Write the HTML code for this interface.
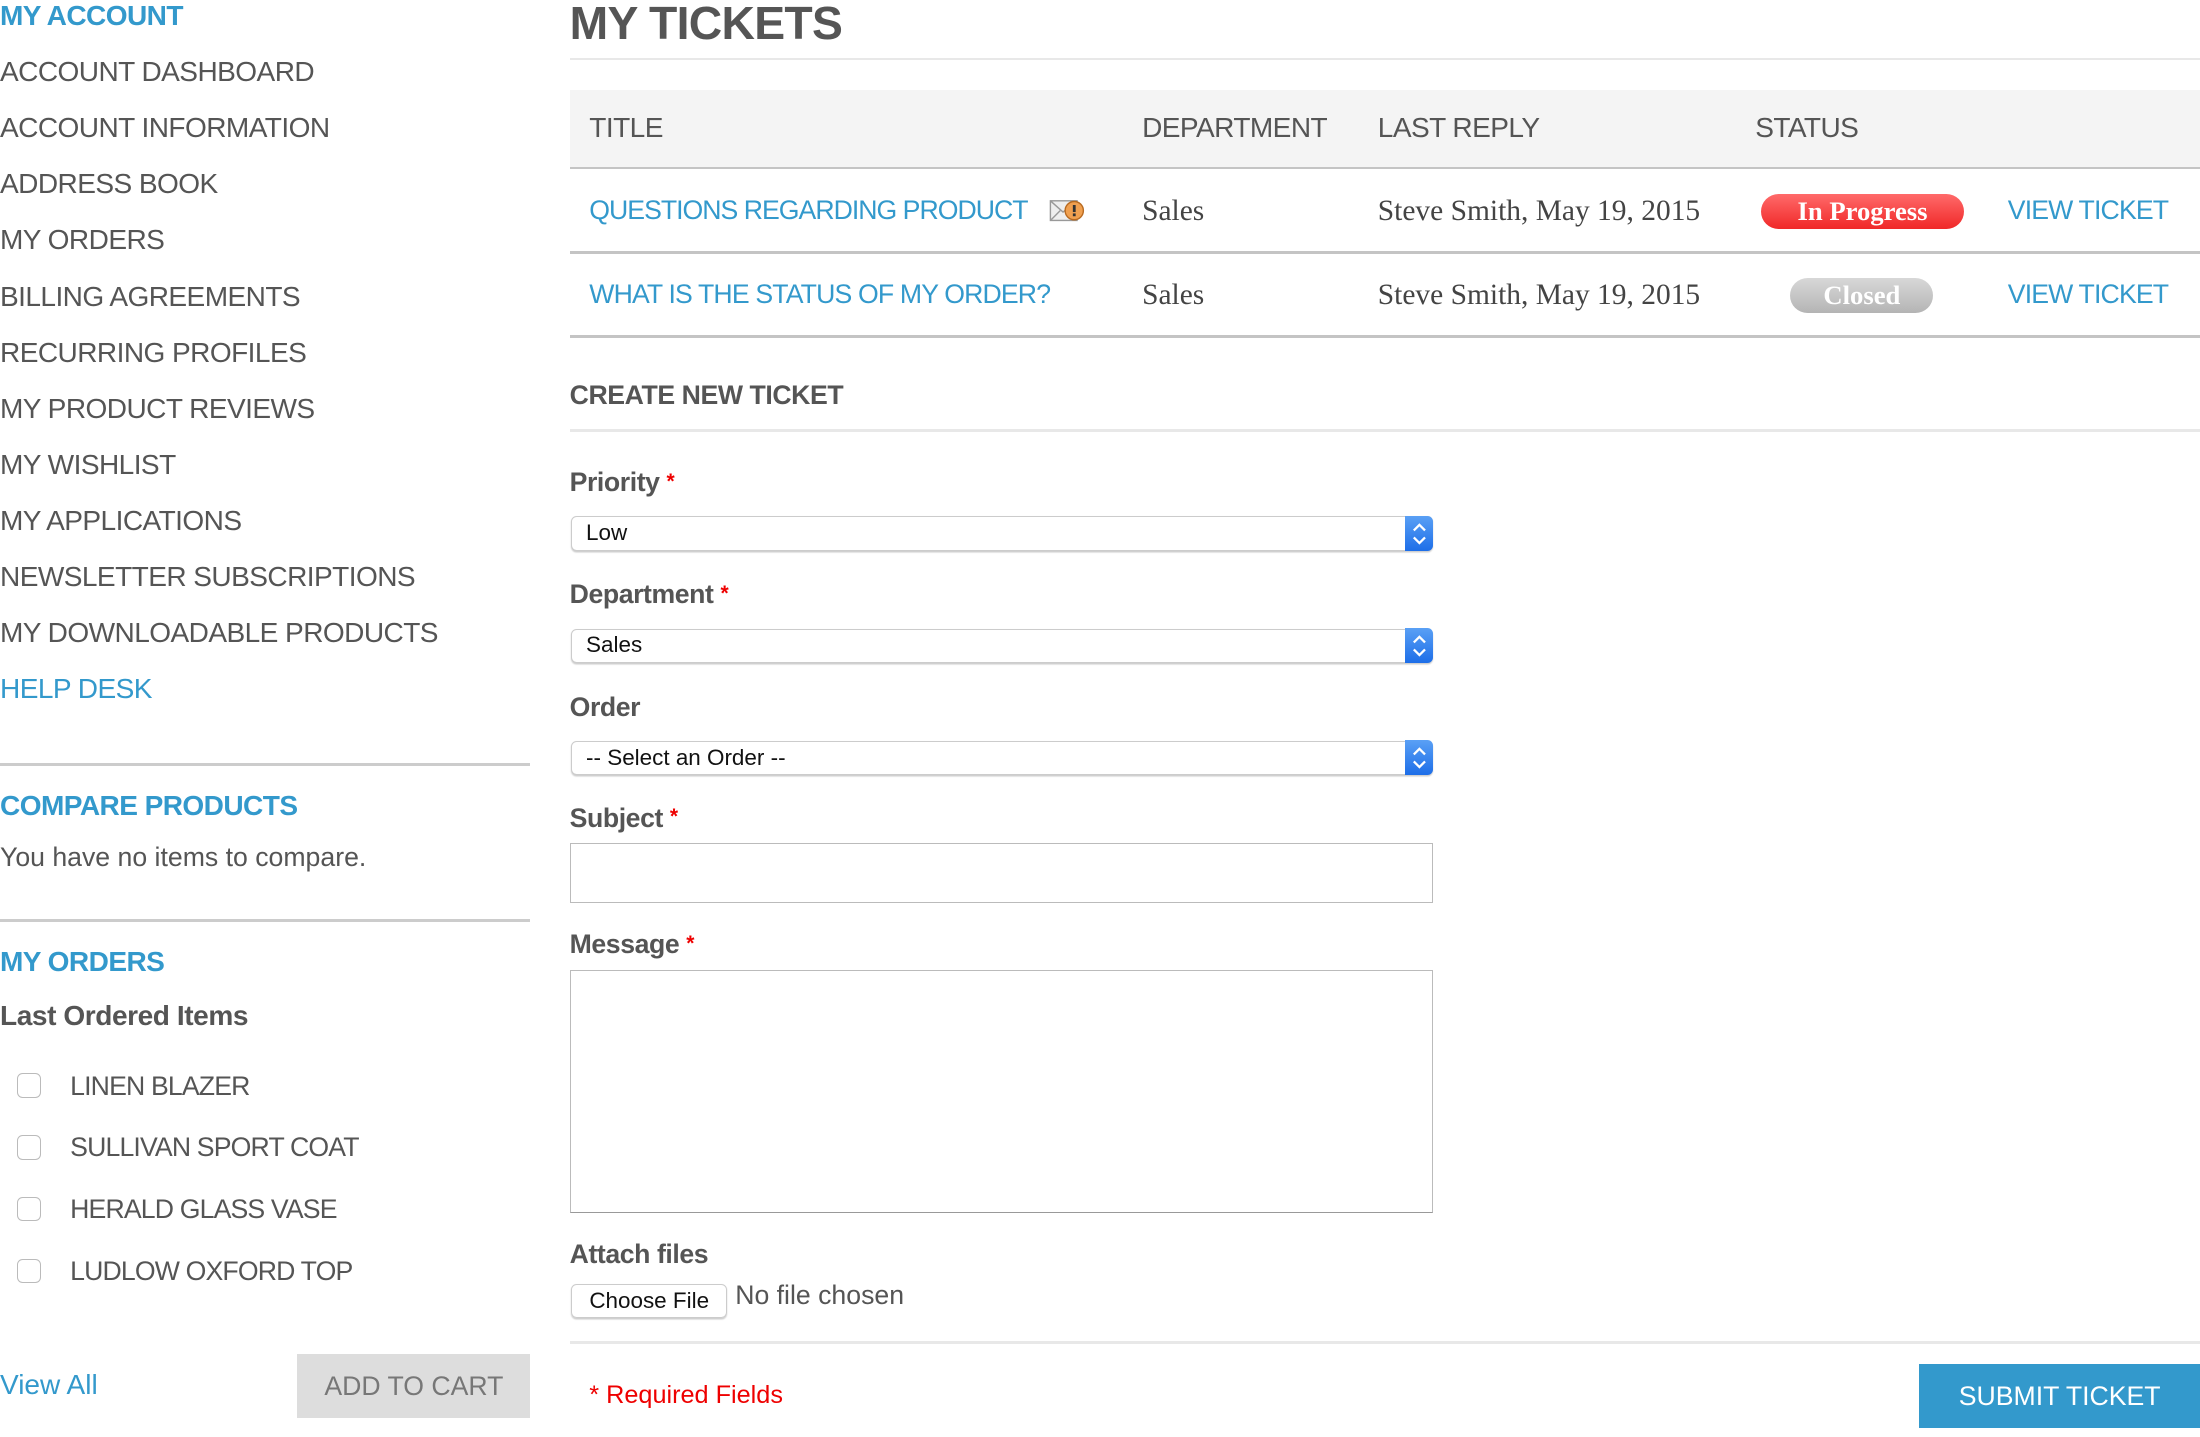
<!DOCTYPE html>
<html><head><meta charset="utf-8">
<style>
html,body{margin:0;padding:0;background:#fff;overflow:hidden;width:2200px;height:1436px}
#w{position:absolute;left:0;top:0;width:1568px;height:1024px;zoom:1.40306;font-family:"Liberation Sans",sans-serif;color:#555}
.a{position:absolute;white-space:nowrap}
.nav{font-size:20px;color:#555;letter-spacing:-0.4px}
.blue{color:#3399cc}
.hr{position:absolute;height:2px;background:#e8e8e8}
.sel{position:absolute;left:407px;width:613px;height:23px;border:1px solid #ccc;border-radius:4px;box-shadow:0 1px 1px rgba(0,0,0,.2);background:#fff;font-size:16px;color:#111}
.sel span{position:absolute;left:10px;top:2px}
.sel i{position:absolute;right:-1px;top:-1px;width:20px;height:25px;background:linear-gradient(#5aa0f5,#1d6ee8);border-radius:0 4px 4px 0}
.sel i svg{position:absolute;left:4px;top:4px}
.lbl{font-size:19px;color:#555;font-weight:bold;letter-spacing:-0.3px}
.lbl b{color:#e00;font-size:15px;position:relative;top:2px;vertical-align:top}
.cb{position:absolute;left:12px;width:16px;height:16px;border:1px solid #bbb;border-radius:4px}
.serif{font-family:"Liberation Serif",serif;font-size:21px;color:#444}
</style></head><body><div id="w">
<div class="a blue" style="left:0;top:0;font-size:20px;font-weight:bold;letter-spacing:-0.4px">MY ACCOUNT</div>
<div class="a nav" style="left:0;top:40px">ACCOUNT DASHBOARD</div>
<div class="a nav" style="left:0;top:80px">ACCOUNT INFORMATION</div>
<div class="a nav" style="left:0;top:120px">ADDRESS BOOK</div>
<div class="a nav" style="left:0;top:160px">MY ORDERS</div>
<div class="a nav" style="left:0;top:200px">BILLING AGREEMENTS</div>
<div class="a nav" style="left:0;top:240px">RECURRING PROFILES</div>
<div class="a nav" style="left:0;top:280px">MY PRODUCT REVIEWS</div>
<div class="a nav" style="left:0;top:320px">MY WISHLIST</div>
<div class="a nav" style="left:0;top:360px">MY APPLICATIONS</div>
<div class="a nav" style="left:0;top:400px">NEWSLETTER SUBSCRIPTIONS</div>
<div class="a nav" style="left:0;top:440px">MY DOWNLOADABLE PRODUCTS</div>
<div class="a nav blue" style="left:0;top:480px">HELP DESK</div>
<div class="hr" style="left:0;top:544px;width:378px;background:#ccc"></div>
<div class="a blue" style="left:0;top:563px;font-size:20px;font-weight:bold;letter-spacing:-0.4px">COMPARE PRODUCTS</div>
<div class="a" style="left:0;top:600px;font-size:19px">You have no items to compare.</div>
<div class="hr" style="left:0;top:655px;width:378px;background:#ccc"></div>
<div class="a blue" style="left:0;top:674px;font-size:20px;font-weight:bold;letter-spacing:-0.4px">MY ORDERS</div>
<div class="a" style="left:0;top:713px;font-size:20px;font-weight:bold;letter-spacing:-0.3px">Last Ordered Items</div>
<div class="cb" style="top:765px"></div><div class="a nav" style="left:50px;top:763px;font-size:19px;letter-spacing:-0.6px">LINEN BLAZER</div>
<div class="cb" style="top:809px"></div><div class="a nav" style="left:50px;top:807px;font-size:19px;letter-spacing:-0.6px">SULLIVAN SPORT COAT</div>
<div class="cb" style="top:853px"></div><div class="a nav" style="left:50px;top:851px;font-size:19px;letter-spacing:-0.6px">HERALD GLASS VASE</div>
<div class="cb" style="top:897px"></div><div class="a nav" style="left:50px;top:895px;font-size:19px;letter-spacing:-0.6px">LUDLOW OXFORD TOP</div>
<div class="a blue" style="left:0;top:976px;font-size:20px">View All</div>
<div class="a" style="left:212px;top:965px;width:166px;height:46px;background:#ddd;color:#777;font-size:19px;text-align:center;line-height:46px">ADD TO CART</div>

<div class="a" style="left:406px;top:-3px;font-size:33px;font-weight:bold;color:#555;letter-spacing:-0.5px">MY TICKETS</div>
<div class="hr" style="left:406px;top:41px;width:1162px"></div>
<div class="a" style="left:406px;top:64px;width:1162px;height:55px;background:#f4f4f4;border-bottom:2px solid #c4c4c4"></div>
<div class="a nav" style="left:420px;top:80px">TITLE</div>
<div class="a nav" style="left:814px;top:80px">DEPARTMENT</div>
<div class="a nav" style="left:982px;top:80px">LAST REPLY</div>
<div class="a nav" style="left:1251px;top:80px">STATUS</div>
<div class="a nav blue" style="left:420px;top:139px;font-size:19px;letter-spacing:-0.7px">QUESTIONS REGARDING PRODUCT</div>
<svg class="a" style="left:748px;top:141px" width="26" height="18"><rect x="1" y="2" width="19" height="14" fill="#eee" stroke="#999"/><path d="M1 2 L10 10 L20 2 M1 16 L8 9 M20 16 L13 9" stroke="#999" fill="none"/><circle cx="18" cy="9" r="6.5" fill="#f0a050" stroke="#b86a20"/><rect x="17" y="5" width="2" height="5" fill="#333"/><rect x="17" y="11" width="2" height="2" fill="#333"/></svg>
<div class="a serif" style="left:814px;top:139px">Sales</div>
<div class="a serif" style="left:982px;top:139px">Steve Smith, May 19, 2015</div>
<div class="a" style="left:1255px;top:138px;width:145px;height:25px;border-radius:13px;background:linear-gradient(#ff6a6a,#f02828);color:#fff;font-family:'Liberation Serif',serif;font-weight:bold;font-size:19px;text-align:center;line-height:25px">In Progress</div>
<div class="a nav blue" style="left:1431px;top:139px;font-size:19px;letter-spacing:-0.6px">VIEW TICKET</div>
<div class="a" style="left:406px;top:179px;width:1162px;height:2px;background:#c4c4c4"></div>
<div class="a nav blue" style="left:420px;top:199px;font-size:19px;letter-spacing:-0.6px">WHAT IS THE STATUS OF MY ORDER?</div>
<div class="a serif" style="left:814px;top:199px">Sales</div>
<div class="a serif" style="left:982px;top:199px">Steve Smith, May 19, 2015</div>
<div class="a" style="left:1276px;top:198px;width:102px;height:25px;border-radius:13px;background:linear-gradient(#d8d8d8,#b4b4b4);color:#fff;font-family:'Liberation Serif',serif;font-weight:bold;font-size:19px;text-align:center;line-height:25px">Closed</div>
<div class="a nav blue" style="left:1431px;top:199px;font-size:19px;letter-spacing:-0.6px">VIEW TICKET</div>
<div class="a" style="left:406px;top:239px;width:1162px;height:2px;background:#c4c4c4"></div>

<div class="a" style="left:406px;top:271px;font-size:19px;font-weight:bold;color:#555;letter-spacing:-0.3px">CREATE NEW TICKET</div>
<div class="hr" style="left:406px;top:306px;width:1162px"></div>
<div class="a lbl" style="left:406px;top:333px">Priority <b>*</b></div>
<div class="sel" style="top:368px"><span>Low</span><i><svg width="12" height="17"><path d="M2 6 L6 2 L10 6 M2 11 L6 15 L10 11" stroke="#fff" stroke-width="1.6" fill="none"/></svg></i></div>
<div class="a lbl" style="left:406px;top:413px">Department <b>*</b></div>
<div class="sel" style="top:448px"><span>Sales</span><i><svg width="12" height="17"><path d="M2 6 L6 2 L10 6 M2 11 L6 15 L10 11" stroke="#fff" stroke-width="1.6" fill="none"/></svg></i></div>
<div class="a lbl" style="left:406px;top:493px">Order</div>
<div class="sel" style="top:528px"><span>-- Select an Order --</span><i><svg width="12" height="17"><path d="M2 6 L6 2 L10 6 M2 11 L6 15 L10 11" stroke="#fff" stroke-width="1.6" fill="none"/></svg></i></div>
<div class="a lbl" style="left:406px;top:572px">Subject <b>*</b></div>
<div class="a" style="left:406px;top:601px;width:614px;height:41px;border:1px solid #bbb"></div>
<div class="a lbl" style="left:406px;top:662px">Message <b>*</b></div>
<div class="a" style="left:406px;top:691px;width:614px;height:172px;border:1px solid #bbb;border-bottom-color:#999"></div>
<div class="a lbl" style="left:406px;top:883px">Attach files</div>
<div class="a" style="left:407px;top:915px;width:110px;height:23px;border:1px solid #ccc;border-radius:4px;box-shadow:0 1px 1px rgba(0,0,0,.2);font-size:16px;color:#111;text-align:center;line-height:23px">Choose File</div>
<div class="a" style="left:524px;top:912px;font-size:19px;color:#555">No file chosen</div>
<div class="hr" style="left:406px;top:956px;width:1162px"></div>
<div class="a" style="left:420px;top:984px;font-size:18px;color:#e00">* Required Fields</div>
<div class="a" style="left:1368px;top:972px;width:200px;height:46px;background:#3399cc;color:#fff;font-size:19px;text-align:center;line-height:46px">SUBMIT TICKET</div>
</div></body></html>
